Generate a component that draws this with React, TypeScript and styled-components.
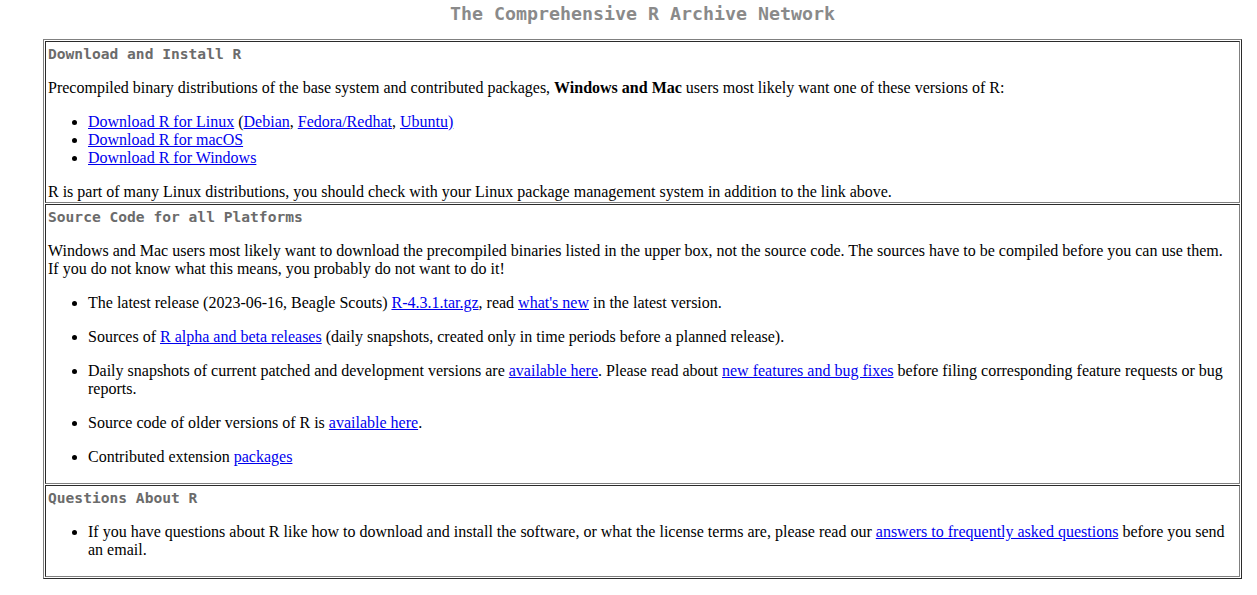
import React from "react";
import styled, { createGlobalStyle } from "styled-components";

const GlobalStyle = createGlobalStyle`
  html, body { margin: 0; padding: 0; background: #ffffff; }
  body {
    font-family: "Liberation Serif", "Times New Roman", serif;
    font-size: 16px;
    line-height: 18px;
    color: #000000;
  }
`;

const Page = styled.div`
  width: 1199px;
  margin-left: 43px;
`;

const Title = styled.h1`
  margin: 3px 0 14px 0;
  font-family: "DejaVu Sans Mono", "Liberation Mono", monospace;
  font-size: 18.3px;
  line-height: 22px;
  font-weight: bold;
  color: #8a8a8a;
  text-align: center;
`;

const Frame = styled.div`
  display: flex;
  flex-direction: column;
  gap: 1px;
  padding: 1px;
  border: 1px solid;
  border-color: #808080 #2b2b2b #2b2b2b #808080;
`;

const Cell = styled.section`
  padding: 1px 2px;
  border: 1px solid;
  border-color: #2b2b2b #808080 #808080 #2b2b2b;
  & > p:last-child { margin-bottom: 0; }
`;

const Heading = styled.h2`
  margin: 2px 0 16px 0;
  font-family: "DejaVu Sans Mono", "Liberation Mono", monospace;
  font-size: 14.6px;
  line-height: 18px;
  font-weight: bold;
  color: #6b6b6b;
`;

const Para = styled.p`
  margin: 16px 0;
`;

const List = styled.ul`
  margin: 16px 0;
  padding-left: 40px;
  list-style: disc;
`;

const Item = styled.li`
  & > p { margin: 16px 0; }
`;

const Link = styled.a`
  color: #0000ee;
  text-decoration: underline;
`;

export default function App() {
  return (
    <>
      <GlobalStyle />
      <Page>
        <Title>The Comprehensive R Archive Network</Title>
        <Frame>
          <Cell>
            <Heading>Download and Install R</Heading>
            <Para>
              Precompiled binary distributions of the base system and contributed packages,{" "}
              <b>Windows and Mac</b> users most likely want one of these versions of R:
            </Para>
            <List>
              <Item>
                <Link href="#">Download R for Linux</Link> (<Link href="#">Debian</Link>,{" "}
                <Link href="#">Fedora/Redhat</Link>, <Link href="#">Ubuntu)</Link>
              </Item>
              <Item>
                <Link href="#">Download R for macOS</Link>
              </Item>
              <Item>
                <Link href="#">Download R for Windows</Link>
              </Item>
            </List>
            <Para>
              R is part of many Linux distributions, you should check with your Linux package
              management system in addition to the link above.
            </Para>
          </Cell>
          <Cell>
            <Heading>Source Code for all Platforms</Heading>
            <Para>
              Windows and Mac users most likely want to download the precompiled binaries listed in
              the upper box, not the source code. The sources have to be compiled before you can use
              them. If you do not know what this means, you probably do not want to do it!
            </Para>
            <List>
              <Item>
                <p>
                  The latest release (2023-06-16, Beagle Scouts) <Link href="#">R-4.3.1.tar.gz</Link>,
                  read <Link href="#">what's new</Link> in the latest version.
                </p>
              </Item>
              <Item>
                <p>
                  Sources of <Link href="#">R alpha and beta releases</Link> (daily snapshots,
                  created only in time periods before a planned release).
                </p>
              </Item>
              <Item>
                <p>
                  Daily snapshots of current patched and development versions are{" "}
                  <Link href="#">available here</Link>. Please read about{" "}
                  <Link href="#">new features and bug fixes</Link> before filing corresponding
                  feature requests or bug reports.
                </p>
              </Item>
              <Item>
                <p>
                  Source code of older versions of R is <Link href="#">available here</Link>.
                </p>
              </Item>
              <Item>
                <p>
                  Contributed extension <Link href="#">packages</Link>
                </p>
              </Item>
            </List>
          </Cell>
          <Cell>
            <Heading>Questions About R</Heading>
            <List>
              <Item>
                If you have questions about R like how to download and install the software, or
                what the license terms are, please read our{" "}
                <Link href="#">answers to frequently asked questions</Link> before you send an
                email.
              </Item>
            </List>
          </Cell>
        </Frame>
      </Page>
    </>
  );
}
